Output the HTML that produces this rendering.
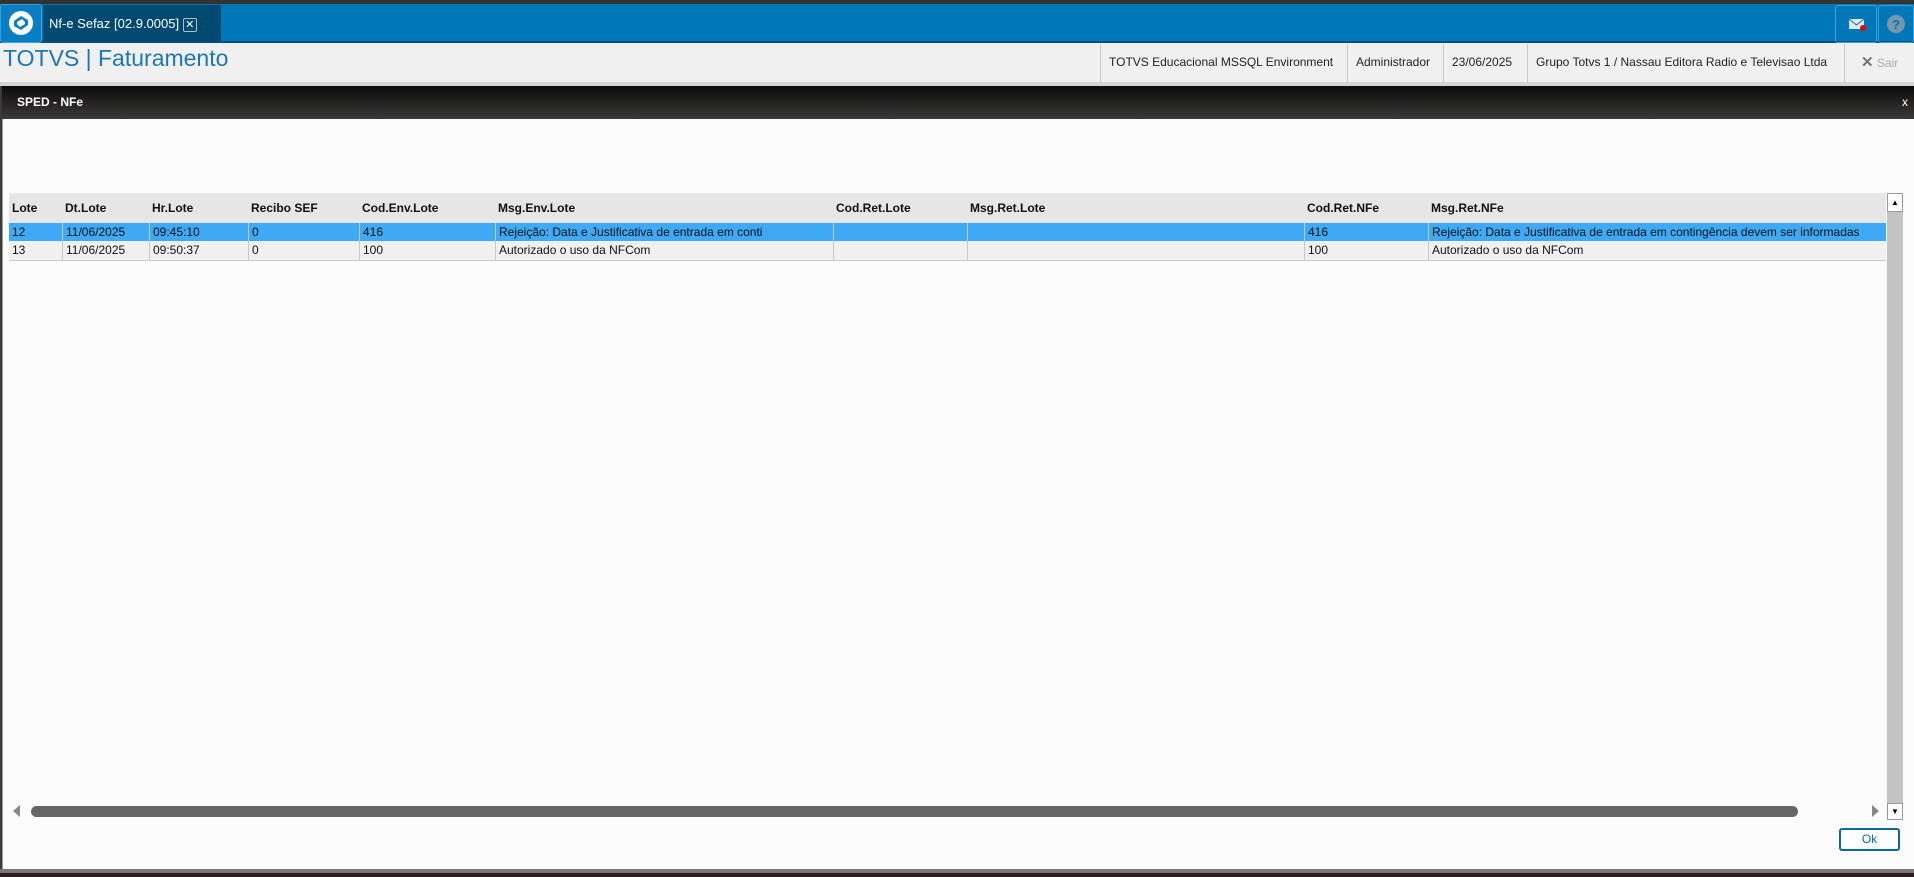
<!DOCTYPE html>
<html><head><meta charset="utf-8"><style>
*{margin:0;padding:0;box-sizing:border-box}
body{width:1914px;height:877px;overflow:hidden;background:#3a3a3a;font-family:"Liberation Sans",sans-serif;position:relative}
.abs{position:absolute}
#top{left:0;top:4px;width:1914px;height:39px;background:#0078b8;border-bottom:2px solid #00508a}
#logo{left:0;top:4px;width:42px;height:39px;background:#0a7ec2;border:1px solid #3ba0dd;border-radius:3px}
#tab{left:43px;top:5px;width:178px;height:37px;background:#004a72;color:#fff;font-size:13px;line-height:37px;padding-left:6px}
#hdr{left:0;top:43px;width:1914px;height:39px;background:#f0f0f0}
#title{left:3px;top:45px;font-size:23px;color:#1a78b8}
.hi{top:44px;height:38px;border-left:1px solid #c8c8c8;font-size:12px;line-height:37px;color:#222;padding-left:8px}
#gap{left:0;top:82px;width:1914px;height:4px;background:#d4d4d4}
#mh{left:2px;top:86px;width:1912px;height:33px;background:linear-gradient(#0b0b0b,#3c3a38);color:#fff;font-weight:bold;font-size:12px;line-height:33px;padding-left:15px}
#mb{left:2px;top:119px;width:1912px;height:750px;background:#fbfbfb;border-left:1px solid #999}
.r{position:absolute;left:9px;width:1877px;font-size:12px;color:#111}
.c{position:absolute;top:0;height:100%;padding-left:3px;border-left:1px solid #c8c8c8;white-space:nowrap}
.h .c{border-left:none;font-weight:bold}
</style></head><body>
<div class="abs" style="left:0;top:0;width:1914px;height:4px;background:#333"></div>
<div id="top" class="abs"></div>
<div id="logo" class="abs"><svg width="40" height="37" viewBox="0 0 40 37"><circle cx="20" cy="18" r="12" fill="#fff"/><path d="M13 16 L20 11 L27 15 L27 20 L20 25 L13 21Z" fill="#0a7ec2"/><path d="M16 17 L21 14 L24 17 L24 19 L19 22 L16 19Z" fill="#fff"/></svg></div>
<div id="tab" class="abs">Nf-e Sefaz [02.9.0005] <span style="display:inline-block;width:14px;height:14px;border:1px solid #bbb;border-radius:2px;font-size:11px;line-height:12px;text-align:center;vertical-align:middle">✕</span></div>
<div class="abs" style="left:1835px;top:5px;width:42px;height:38px;border:1px solid #3ba0dd;border-radius:3px"><svg width="40" height="36"><rect x="13" y="13" width="15" height="10" fill="#dfe8ee"/><path d="M13 13 L20.5 19 L28 13" stroke="#0078b8" fill="none"/><circle cx="27" cy="22" r="3" fill="#e00"/></svg></div>
<div class="abs" style="left:1878px;top:5px;width:36px;height:38px;border:1px solid #3ba0dd;border-radius:3px"><svg width="34" height="36"><circle cx="17" cy="18" r="9" fill="#7a96ab"/><text x="17" y="23" font-size="13" font-weight="bold" text-anchor="middle" fill="#0078b8" font-family="Liberation Sans">?</text></svg></div>
<div id="hdr" class="abs"></div>
<div id="title" class="abs">TOTVS | Faturamento</div>
<div class="abs hi" style="left:1100px;width:247px">TOTVS Educacional MSSQL Environment</div>
<div class="abs hi" style="left:1347px;width:96px">Administrador</div>
<div class="abs hi" style="left:1443px;width:84px">23/06/2025</div>
<div class="abs hi" style="left:1527px;width:317px">Grupo Totvs 1 / Nassau Editora Radio e Televisao Ltda</div>
<div class="abs hi" style="left:1844px;width:70px;color:#aaa;padding-left:16px"><b style="color:#777;font-size:15px">✕</b> Sair</div>
<div id="gap" class="abs"></div>
<div id="mh" class="abs">SPED - NFe<span style="position:absolute;right:6px;font-weight:normal">x</span></div>
<div id="mb" class="abs"></div>
<div class="r h" style="top:193px;height:30px;line-height:30px;background:#e6e6e6">
<div class="c" style="left:0">Lote</div><div class="c" style="left:53px">Dt.Lote</div><div class="c" style="left:140px">Hr.Lote</div><div class="c" style="left:239px">Recibo SEF</div><div class="c" style="left:350px">Cod.Env.Lote</div><div class="c" style="left:486px">Msg.Env.Lote</div><div class="c" style="left:824px">Cod.Ret.Lote</div><div class="c" style="left:958px">Msg.Ret.Lote</div><div class="c" style="left:1295px">Cod.Ret.NFe</div><div class="c" style="left:1419px">Msg.Ret.NFe</div></div>
<div class="r" style="top:223px;height:18px;line-height:18px;background:#3eaaf5">
<div class="c" style="left:0;border:none">12</div><div class="c" style="left:53px">11/06/2025</div><div class="c" style="left:140px">09:45:10</div><div class="c" style="left:239px">0</div><div class="c" style="left:350px">416</div><div class="c" style="left:486px">Rejeição: Data e Justificativa de entrada em conti</div><div class="c" style="left:824px"></div><div class="c" style="left:958px"></div><div class="c" style="left:1295px">416</div><div class="c" style="left:1419px">Rejeição: Data e Justificativa de entrada em contingência devem ser informadas</div></div>
<div class="r" style="top:241px;height:20px;line-height:19px;background:#f0f0f0;border-bottom:1px solid #ccc">
<div class="c" style="left:0;border:none">13</div><div class="c" style="left:53px">11/06/2025</div><div class="c" style="left:140px">09:50:37</div><div class="c" style="left:239px">0</div><div class="c" style="left:350px">100</div><div class="c" style="left:486px">Autorizado o uso da NFCom</div><div class="c" style="left:824px"></div><div class="c" style="left:958px"></div><div class="c" style="left:1295px">100</div><div class="c" style="left:1419px">Autorizado o uso da NFCom</div></div>
<div class="abs" style="left:1887px;top:193px;width:16px;height:19px;background:#fff;border:1px solid #999;font-size:8px;text-align:center;line-height:17px">▲</div>
<div class="abs" style="left:1887px;top:212px;width:16px;height:591px;background:#c3c3c3"></div>
<div class="abs" style="left:1887px;top:803px;width:16px;height:17px;background:#fff;border:1px solid #999;font-size:8px;text-align:center;line-height:15px">▼</div>
<div class="abs" style="left:13px;top:805px;width:0;height:0;border:6px solid transparent;border-right:7px solid #888;border-left:none"></div>
<div class="abs" style="left:31px;top:806px;width:1767px;height:11px;background:#666;border-radius:6px"></div>
<div class="abs" style="left:1872px;top:805px;width:0;height:0;border:6px solid transparent;border-left:7px solid #888;border-right:none"></div>
<div class="abs" style="left:1839px;top:828px;width:61px;height:23px;border:2px solid #0a6aa0;border-radius:3px;font-size:12px;color:#0a6aa0;text-align:center;line-height:19px;background:#fff">Ok</div>
<div class="abs" style="left:0;top:869px;width:1914px;height:4px;background:#777"></div>
<div class="abs" style="left:0;top:873px;width:1914px;height:4px;background:#2a1e22"></div>
</body></html>
